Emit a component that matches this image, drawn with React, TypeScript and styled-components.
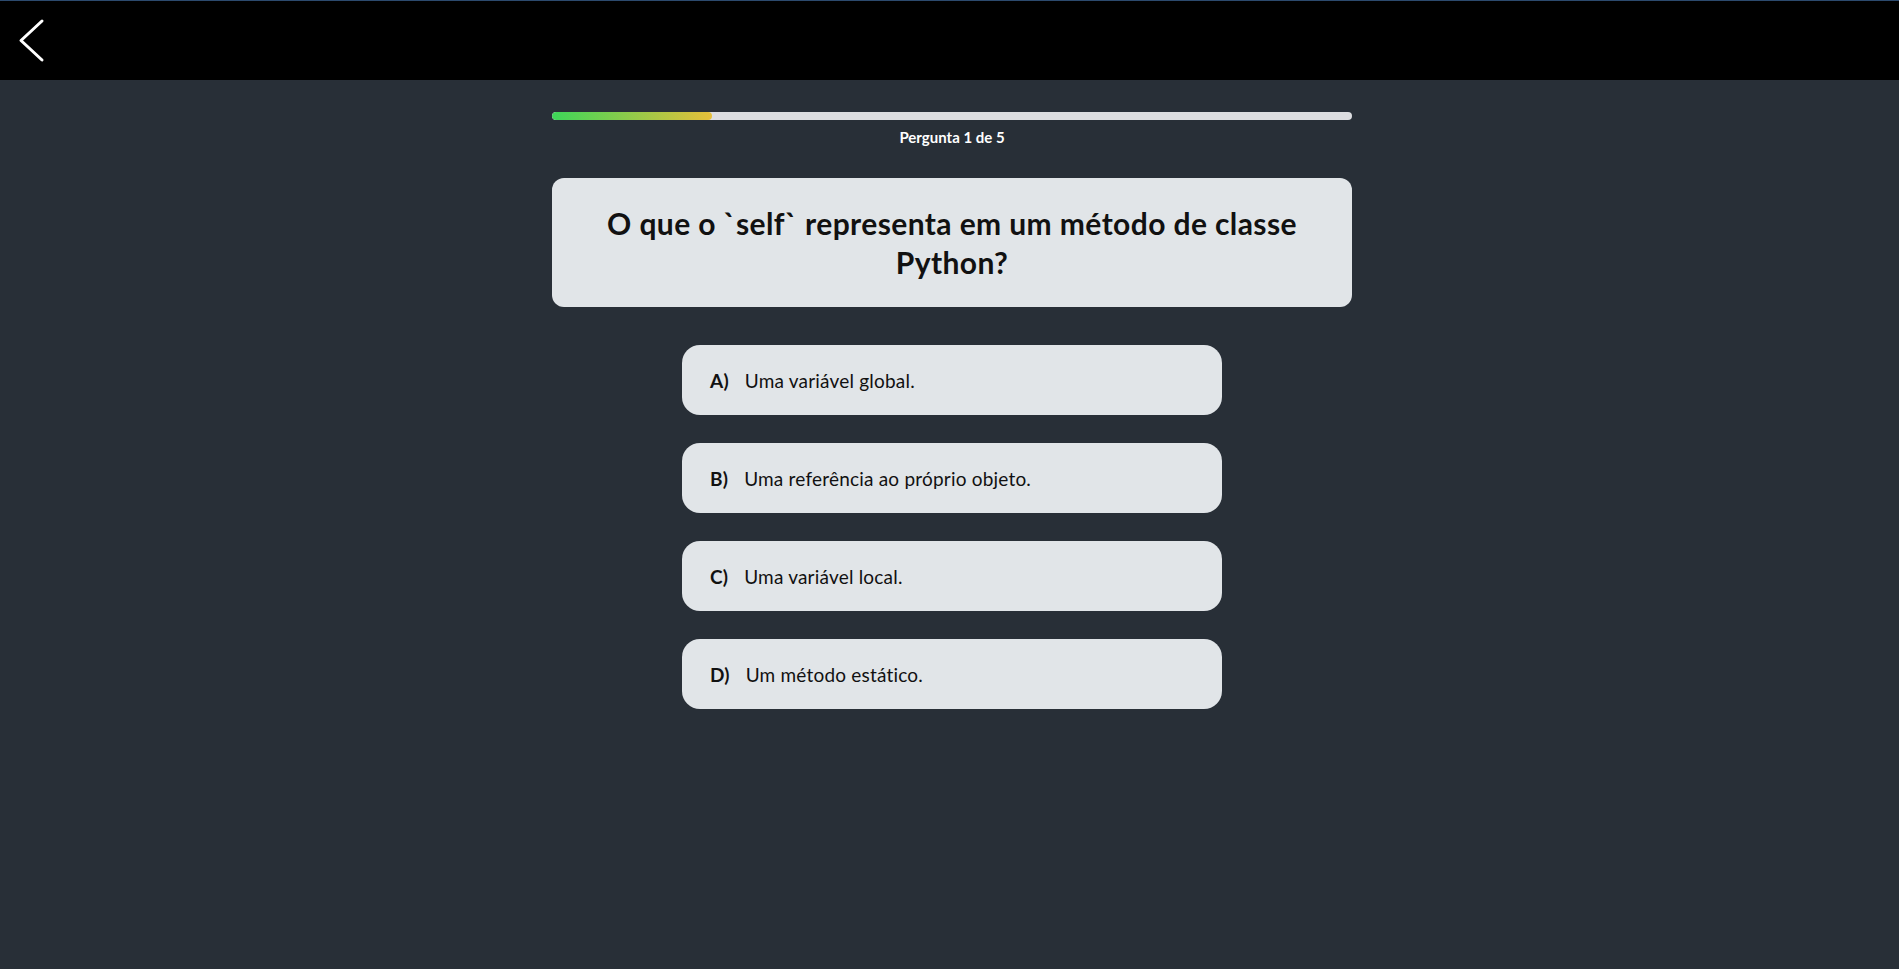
import styled, { createGlobalStyle } from 'styled-components';

const GlobalStyle = createGlobalStyle`
  html, body {
    margin: 0;
    padding: 0;
    background: #282f37;
  }
  * {
    box-sizing: border-box;
  }
`;

const Page = styled.div`
  min-height: 100vh;
  padding-left: 5px;
  background: #282f37;
  font-family: Lato, 'Noto Sans', sans-serif;
  color: #111;
`;

const Header = styled.header`
  height: 80px;
  margin-left: -5px;
  background: #000;
  border-top: 1px solid #2c4a6e;
  display: flex;
  align-items: center;
  padding-left: 17px;
`;

const BackButton = styled.button`
  background: none;
  border: none;
  padding: 0;
  display: flex;
  cursor: pointer;
`;

const Main = styled.main`
  width: 800px;
  margin: 0 auto;
  padding-top: 32px;
  display: flex;
  flex-direction: column;
  align-items: center;
`;

const Track = styled.div`
  width: 100%;
  height: 8px;
  border-radius: 4px;
  background: #dcdde0;
  overflow: hidden;
`;

const Fill = styled.div`
  height: 100%;
  border-radius: 4px;
  background: linear-gradient(90deg, #3dd659, #e7bf3a);
`;

const Counter = styled.div`
  margin-top: 8px;
  font-size: 15px;
  font-weight: 700;
  color: #fff;
`;

const QuestionCard = styled.div`
  width: 100%;
  margin-top: 32px;
  min-height: 129px;
  padding: 24px 40px;
  background: #e1e5e8;
  border-radius: 12px;
  display: flex;
  align-items: center;
  justify-content: center;
`;

const QuestionText = styled.h1`
  margin: 0;
  font-size: 30px;
  line-height: 39px;
  letter-spacing: 0.4px;
  font-weight: 700;
  text-align: center;
  color: #111;
`;

const Options = styled.div`
  width: 540px;
  margin-top: 38px;
  display: flex;
  flex-direction: column;
  gap: 28px;
`;

const Option = styled.button`
  height: 70px;
  width: 100%;
  border: none;
  border-radius: 18px;
  background: #e1e5e8;
  display: flex;
  align-items: center;
  gap: 16px;
  padding: 0 28px;
  font-family: inherit;
  font-size: 19px;
  letter-spacing: 0.2px;
  color: #111;
  cursor: pointer;
  text-align: left;
`;

const Letter = styled.span`
  font-weight: 700;
`;

const options = [
  { letter: 'A)', text: 'Uma variável global.' },
  { letter: 'B)', text: 'Uma referência ao próprio objeto.' },
  { letter: 'C)', text: 'Uma variável local.' },
  { letter: 'D)', text: 'Um método estático.' },
];

const App = () => {
  const current = 1;
  const total = 5;

  return (
    <Page>
      <GlobalStyle />
      <Header>
        <BackButton aria-label='Voltar'>
          <svg width='30' height='46' viewBox='0 0 30 46' fill='none'>
            <polyline
              points='25,3 4,22.5 25,42'
              stroke='#fff'
              strokeWidth='3'
              strokeLinecap='round'
              strokeLinejoin='round'
            />
          </svg>
        </BackButton>
      </Header>
      <Main>
        <Track>
          <Fill style={{ width: `${(current / total) * 100}%` }} />
        </Track>
        <Counter>
          Pergunta {current} de {total}
        </Counter>
        <QuestionCard>
          <QuestionText>
            O que o `self` representa em um método de classe Python?
          </QuestionText>
        </QuestionCard>
        <Options>
          {options.map((o) => (
            <Option key={o.letter}>
              <Letter>{o.letter}</Letter>
              <span>{o.text}</span>
            </Option>
          ))}
        </Options>
      </Main>
    </Page>
  );
};

export default App;
